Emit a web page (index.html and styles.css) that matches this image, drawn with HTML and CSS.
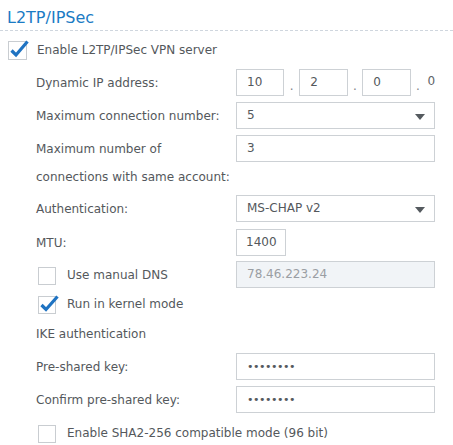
FILE: index.html
```html
<!DOCTYPE html>
<html>
<head>
<meta charset="utf-8">
<link rel="stylesheet" href="styles.css">
</head>
<body>
<div class="panel">
  <div class="title">L2TP/IPSec</div>
  <div class="check-row main-check">
    <span class="cb checked"><svg viewBox="0 0 22 22" width="22" height="22"><rect x="0.5" y="3.5" width="18" height="18" fill="#fff" stroke="#c9cdd1"/><path d="M3.5 12.5 L8 17 L19.5 3.5" fill="none" stroke="#1f73c2" stroke-width="3.2" stroke-linejoin="miter"/></svg></span>
    <span class="cb-label">Enable L2TP/IPSec VPN server</span>
  </div>
  <div class="form">
    <div class="row">
      <div class="label">Dynamic IP address:</div>
      <div class="ctrl ip">
        <div class="box octet">10</div><span class="dot">.</span>
        <div class="box octet">2</div><span class="dot">.</span>
        <div class="box octet">0</div><span class="dot">.</span><span class="last">0</span>
      </div>
    </div>
    <div class="row">
      <div class="label">Maximum connection number:</div>
      <div class="ctrl"><div class="box select">5<span class="arrow"></span></div></div>
    </div>
    <div class="row">
      <div class="label">Maximum number of<br>connections with same account:</div>
      <div class="ctrl"><div class="box">3</div></div>
    </div>
    <div class="row r-auth">
      <div class="label">Authentication:</div>
      <div class="ctrl"><div class="box select">MS-CHAP v2<span class="arrow"></span></div></div>
    </div>
    <div class="row r-mtu">
      <div class="label">MTU:</div>
      <div class="ctrl"><div class="box mtu">1400</div></div>
    </div>
    <div class="row r-dns">
      <div class="label sub">
        <span class="cb"><svg viewBox="0 0 22 22" width="22" height="22"><rect x="0.5" y="3.5" width="17" height="17" fill="#fff" stroke="#c9cdd1"/></svg></span>
        <span class="cb-label">Use manual DNS</span>
      </div>
      <div class="ctrl"><div class="box disabled">78.46.223.24</div></div>
    </div>
    <div class="check-row sub-check r-kernel">
      <span class="cb checked"><svg viewBox="0 0 22 22" width="22" height="22"><rect x="0.5" y="3.5" width="17" height="17" fill="#fff" stroke="#c9cdd1"/><path d="M3.5 12 L8 16.5 L19.5 3.5" fill="none" stroke="#1f73c2" stroke-width="3.2"/></svg></span>
      <span class="cb-label">Run in kernel mode</span>
    </div>
    <div class="plain r-ike">IKE authentication</div>
    <div class="row r-psk">
      <div class="label">Pre-shared key:</div>
      <div class="ctrl"><div class="box pw">••••••••</div></div>
    </div>
    <div class="row">
      <div class="label">Confirm pre-shared key:</div>
      <div class="ctrl"><div class="box pw">••••••••</div></div>
    </div>
    <div class="check-row sub-check r-sha">
      <span class="cb"><svg viewBox="0 0 22 22" width="22" height="22"><rect x="0.5" y="3.5" width="17" height="17" fill="#fff" stroke="#c9cdd1"/></svg></span>
      <span class="cb-label">Enable SHA2-256 compatible mode (96 bit)</span>
    </div>
  </div>
</div>
</body>
</html>
```

FILE: styles.css
```css
html, body {
  margin: 0;
  padding: 0;
  background: #fff;
}
body {
  font-family: "DejaVu Sans", Verdana, sans-serif;
  font-size: 12px;
  color: #54585c;
  width: 453px;
  height: 445px;
  overflow: hidden;
}
.title {
  padding: 8px 0 0 7px;
  height: 22px;
  font-size: 16px;
  line-height: 20px;
  color: #1b7bc4;
  border-bottom: 1px dashed #cfd6de;
}
.check-row {
  display: flex;
  align-items: center;
  height: 22px;
}
.main-check {
  margin: 7px 0 0 8px;
}
.cb {
  display: block;
  width: 22px;
  height: 22px;
  flex: none;
}
.cb svg {
  display: block;
}
.cb-label {
  margin-left: 7px;
  white-space: nowrap;
}
.main-check .cb-label {
  margin-top: 2px;
}
.form {
  margin: 9px 0 0 36px;
  display: flex;
  flex-direction: column;
  gap: 5px;
}
.row {
  display: grid;
  grid-template-columns: 200px 199px;
  align-items: start;
}
.label {
  line-height: 28px;
  white-space: nowrap;
}
.label.sub {
  display: flex;
  align-items: center;
  height: 27px;
  margin-left: 2px;
}
.ctrl {
  display: flex;
}
.box {
  box-sizing: border-box;
  height: 27px;
  width: 199px;
  border: 1px solid #cdd1d5;
  background: #fff;
  padding-left: 10px;
  line-height: 25px;
  color: #54585c;
  position: relative;
}
.ip {
  align-items: center;
}
.box.octet {
  width: 49px;
}
.dot {
  width: 15px;
  text-align: center;
  padding-top: 6px;
  color: #808488;
}
.last {
  margin-left: 2px;
  margin-top: -3px;
  color: #606468;
}
.arrow {
  position: absolute;
  right: 9px;
  top: 11px;
  width: 0;
  height: 0;
  border-left: 5px solid transparent;
  border-right: 5px solid transparent;
  border-top: 6px solid #555a5f;
}
.r-auth {
  margin-top: -1px;
}
.r-mtu {
  margin-top: 1px;
}
.box.mtu {
  width: 50px;
  padding-left: 9px;
}
.r-dns {
  margin-top: -1px;
}
.box.disabled {
  background: #f1f4f7;
  color: #9a9ea3;
}
.sub-check {
  margin-left: 2px;
}
.r-kernel {
  margin-top: 0;
}
.plain {
  line-height: 20px;
}
.r-ike {
  margin-top: 4px;
}
.r-psk {
  margin-top: 4px;
}
.box.pw {
  font-size: 11px;
  letter-spacing: -0.5px;
  color: #55595e;
}
.r-sha {
  margin-top: 3px;
}
```
